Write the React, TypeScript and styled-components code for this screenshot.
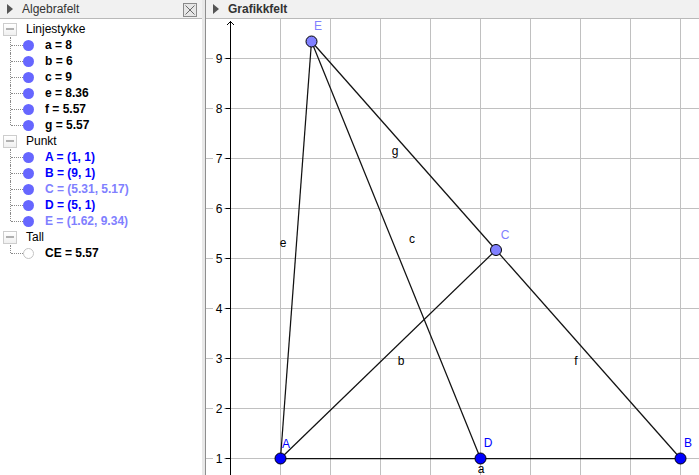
import React from "react";
import styled, { createGlobalStyle } from "styled-components";

const GlobalStyle = createGlobalStyle`
  html, body { margin: 0; padding: 0; overflow: hidden; background: #ffffff; }
  body { font-family: "Liberation Sans", Arial, sans-serif; font-size: 12px; }
  #root { width: 699px; height: 475px; }
`;

const Root = styled.div`
  display: flex;
  width: 699px;
  height: 475px;
  background: #ffffff;
`;

const Panel = styled.div<{ $width?: number }>`
  display: flex;
  flex-direction: column;
  ${(p) => (p.$width ? `width: ${p.$width}px; flex: none;` : "flex: 1; min-width: 0;")}
  height: 100%;
  overflow: hidden;
`;

const Divider = styled.div`
  flex: none;
  width: 3px;
  height: 100%;
  background: #e8e8e8;
  border-right: 1px solid #8e8e8e;
`;

const Header = styled.div`
  flex: none;
  height: 18px;
  display: flex;
  align-items: center;
  background: #f1f1f1;
  border-bottom: 1px solid #b9b9b9;
  box-sizing: content-box;
`;

const HeaderArrow = styled.span<{ $left: number }>`
  width: 0;
  height: 0;
  margin-left: ${(p) => p.$left}px;
  border-top: 5px solid transparent;
  border-bottom: 5px solid transparent;
  border-left: 6px solid #555555;
`;

const HeaderTitle = styled.span<{ $bold?: boolean; $gap: number }>`
  margin-left: ${(p) => p.$gap}px;
  font-weight: ${(p) => (p.$bold ? 700 : 400)};
  color: #333333;
  line-height: 18px;
  flex: 1;
`;

const CloseButton = styled.span`
  display: flex;
  width: 14px;
  height: 14px;
  margin-right: 5px;
  margin-top: 1px;
`;

const TreeBody = styled.div`
  flex: 1;
  padding-top: 2px;
`;

const GroupRow = styled.div`
  display: flex;
  align-items: center;
  height: 16px;
`;

const Toggle = styled.span`
  position: relative;
  box-sizing: border-box;
  width: 14px;
  height: 13px;
  margin-left: 3px;
  border: 1px solid #cdcdcd;
  background: linear-gradient(#ffffff, #f0f0f0);
  display: flex;
  align-items: center;
  justify-content: center;
  &::before {
    content: "";
    width: 8px;
    height: 2px;
    background: #b0b0b0;
  }
`;

const GroupLabel = styled.span`
  margin-left: 9px;
  color: #000000;
`;

const ItemRow = styled.div<{ $last?: boolean }>`
  position: relative;
  display: flex;
  align-items: center;
  height: 16px;
  &::before {
    content: "";
    position: absolute;
    left: 10px;
    top: 0;
    height: ${(p) => (p.$last ? "8px" : "16px")};
    border-left: 1px dotted #8a8a8a;
  }
  &::after {
    content: "";
    position: absolute;
    left: 11px;
    top: 8px;
    width: 12px;
    border-top: 1px dotted #8a8a8a;
  }
`;

const Marble = styled.span<{ $hidden?: boolean }>`
  box-sizing: border-box;
  width: 11px;
  height: 11px;
  margin-left: 23px;
  border-radius: 50%;
  background: ${(p) => (p.$hidden ? "#ffffff" : "#6666ff")};
  border: ${(p) => (p.$hidden ? "1px solid #c4c4c4" : "none")};
`;

const ItemText = styled.span<{ $color: string }>`
  margin-left: 11px;
  font-weight: 700;
  color: ${(p) => p.$color};
  white-space: nowrap;
`;

const Canvas = styled.div`
  flex: 1;
  position: relative;
  background: #ffffff;
  overflow: hidden;
`;

type Item = { text: string; color: string; hidden?: boolean };
type Group = { label: string; items: Item[] };

const BLACK = "#000000";
const BLUE = "#0000ff";
const LIGHT = "#8080ff";

const groups: Group[] = [
  {
    label: "Linjestykke",
    items: [
      { text: "a = 8", color: BLACK },
      { text: "b = 6", color: BLACK },
      { text: "c = 9", color: BLACK },
      { text: "e = 8.36", color: BLACK },
      { text: "f = 5.57", color: BLACK },
      { text: "g = 5.57", color: BLACK },
    ],
  },
  {
    label: "Punkt",
    items: [
      { text: "A = (1, 1)", color: BLUE },
      { text: "B = (9, 1)", color: BLUE },
      { text: "C = (5.31, 5.17)", color: LIGHT },
      { text: "D = (5, 1)", color: BLUE },
      { text: "E = (1.62, 9.34)", color: LIGHT },
    ],
  },
  {
    label: "Tall",
    items: [{ text: "CE = 5.57", color: BLACK, hidden: true }],
  },
];

// graphics coordinates
const W = 493;
const H = 456;
const ox = 24.5;
const oy = 489.5;
const S = 50;
const X = (x: number) => ox + S * x;
const Y = (y: number) => oy - S * y;

const pts = {
  A: { x: 1, y: 1, fill: "#0000ff", label: [286 - 206, 444 - 19], lc: "#0000ff" },
  B: { x: 9, y: 1, fill: "#0000ff", label: [688 - 206, 443 - 19], lc: "#0000ff" },
  C: { x: 5.31, y: 5.17, fill: "#8080ff", label: [505 - 206, 235 - 19], lc: "#8080ff" },
  D: { x: 5, y: 1, fill: "#0000ff", label: [488 - 206, 443 - 19], lc: "#0000ff" },
  E: { x: 1.62, y: 9.34, fill: "#8080ff", label: [318 - 206, 26 - 19], lc: "#8080ff" },
};

type PK = keyof typeof pts;
const segs: { a: PK; b: PK; name: string; lx: number; ly: number }[] = [
  { a: "A", b: "B", name: "a", lx: 481, ly: 469 },
  { a: "A", b: "C", name: "b", lx: 401, ly: 361 },
  { a: "D", b: "E", name: "c", lx: 412, ly: 239 },
  { a: "A", b: "E", name: "e", lx: 283, ly: 243 },
  { a: "B", b: "C", name: "f", lx: 576, ly: 361 },
  { a: "E", b: "C", name: "g", lx: 395, ly: 151 },
];

function GraphicsView() {
  const gridX = [1, 2, 3, 4, 5, 6, 7, 8, 9];
  const gridY = [1, 2, 3, 4, 5, 6, 7, 8, 9];
  return (
    <svg width={W} height={H} viewBox={`0 0 ${W} ${H}`} style={{ display: "block" }}>
      {gridX.map((g) => (
        <line key={"gx" + g} x1={X(g)} y1={0} x2={X(g)} y2={H} stroke="#c0c0c0" strokeWidth={1} />
      ))}
      {gridY.map((g) => (
        <line key={"gy" + g} x1={0} y1={Y(g)} x2={W} y2={Y(g)} stroke="#c0c0c0" strokeWidth={1} />
      ))}
      {/* y axis */}
      <line x1={ox} y1={2} x2={ox} y2={H} stroke="#000" strokeWidth={1} />
      <polyline points={`${ox - 3.5},6 ${ox},2.5 ${ox + 3.5},6`} fill="none" stroke="#000" strokeWidth={1} />
      {gridY.map((g) => (
        <g key={"t" + g}>
          <rect x={7} y={Y(g) - 6} width={11} height={12} fill="#ffffff" />
          <line x1={ox - 5} y1={Y(g)} x2={ox} y2={Y(g)} stroke="#000" strokeWidth={1} />
          <text
            x={13}
            y={Y(g) + 4}
            textAnchor="middle"
            fontFamily="Liberation Sans, Arial, sans-serif"
            fontSize={12}
            fill="#000"
          >
            {g}
          </text>
        </g>
      ))}
      {segs.map((s) => (
        <line
          key={s.name}
          x1={X(pts[s.a].x)}
          y1={Y(pts[s.a].y)}
          x2={X(pts[s.b].x)}
          y2={Y(pts[s.b].y)}
          stroke="#111"
          strokeWidth={1.25}
        />
      ))}
      {segs.map((s) => (
        <text
          key={"l" + s.name}
          x={s.lx - 206}
          y={s.ly - 19 + 4}
          textAnchor="middle"
          fontFamily="Liberation Sans, Arial, sans-serif"
          fontSize={12}
          fill="#000"
        >
          {s.name}
        </text>
      ))}
      {(Object.keys(pts) as PK[]).map((k) => {
        const p = pts[k];
        return (
          <g key={"p" + k}>
            <circle cx={X(p.x)} cy={Y(p.y)} r={5.5} fill={p.fill} stroke="#000" strokeWidth={1} />
            <text
              x={p.label[0]}
              y={p.label[1] + 4}
              textAnchor="middle"
              fontFamily="Liberation Sans, Arial, sans-serif"
              fontSize={12}
              fill={p.lc}
            >
              {k}
            </text>
          </g>
        );
      })}
    </svg>
  );
}

export default function App() {
  return (
    <>
      <GlobalStyle />
      <Root>
        <Panel $width={202}>
          <Header>
            <HeaderArrow $left={7} />
            <HeaderTitle $gap={9}>Algebrafelt</HeaderTitle>
            <CloseButton>
              <svg width="14" height="14" viewBox="0 0 14 14">
                <rect x="0.5" y="0.5" width="13" height="13" fill="#e6e6e6" stroke="#8a8a8a" />
                <path d="M2.5 2.5 L11.5 11.5 M11.5 2.5 L2.5 11.5" stroke="#6a6a6a" strokeWidth="1" />
              </svg>
            </CloseButton>
          </Header>
          <TreeBody>
            {groups.map((g) => (
              <div key={g.label}>
                <GroupRow>
                  <Toggle />
                  <GroupLabel>{g.label}</GroupLabel>
                </GroupRow>
                {g.items.map((it, i) => (
                  <ItemRow key={it.text} $last={i === g.items.length - 1}>
                    <Marble $hidden={it.hidden} />
                    <ItemText $color={it.color}>{it.text}</ItemText>
                  </ItemRow>
                ))}
              </div>
            ))}
          </TreeBody>
        </Panel>
        <Divider />
        <Panel>
          <Header>
            <HeaderArrow $left={7} />
            <HeaderTitle $bold $gap={9}>
              Grafikkfelt
            </HeaderTitle>
          </Header>
          <Canvas>
            <GraphicsView />
          </Canvas>
        </Panel>
      </Root>
    </>
  );
}
